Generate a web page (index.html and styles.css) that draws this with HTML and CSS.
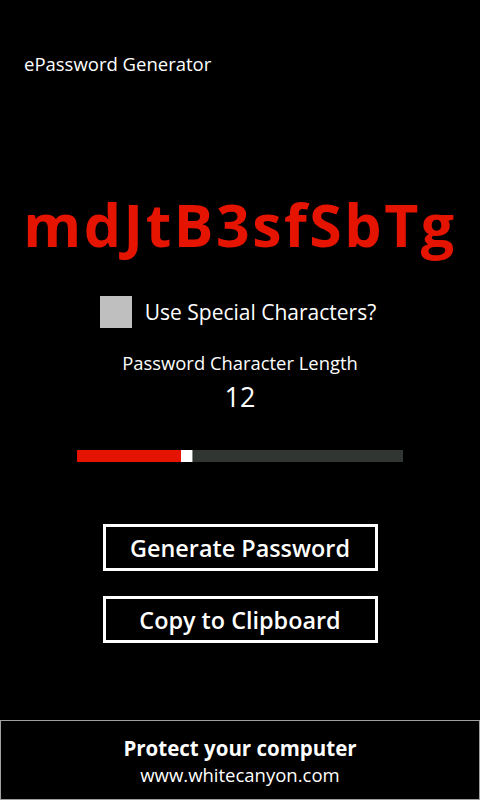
FILE: index.html
```html
<!DOCTYPE html>
<html>
<head>
<meta charset="utf-8">
<title>ePassword Generator</title>
<link rel="stylesheet" href="styles.css">
</head>
<body>
<div class="app">
  <main class="main">
    <div class="title">ePassword Generator</div>
    <div class="password">mdJtB3sfSbTg</div>
    <label class="check-row">
      <span class="checkbox"></span>
      <span class="check-label">Use Special Characters?</span>
    </label>
    <div class="length-label">Password Character Length</div>
    <div class="length-value">12</div>
    <div class="slider">
      <div class="slider-fill" style="width: 104px"></div>
      <div class="slider-thumb"></div>
      <div class="slider-rest"></div>
    </div>
    <div class="buttons">
      <button class="btn">Generate Password</button>
      <button class="btn">Copy to Clipboard</button>
    </div>
  </main>
  <footer class="ad">
    <div class="ad-title">Protect your computer</div>
    <div class="ad-url">www.whitecanyon.com</div>
  </footer>
</div>
</body>
</html>
```

FILE: styles.css
```css
html, body {
  margin: 0;
  padding: 0;
  background: #000;
}
body {
  font-family: "Open Sans", "Noto Sans", sans-serif;
  color: #fff;
}
.app {
  width: 480px;
  height: 800px;
  display: flex;
  flex-direction: column;
}
.main {
  flex: 1;
  display: flex;
  flex-direction: column;
}
.title {
  margin: 52px 0 0 24px;
  font-size: 18.5px;
  line-height: 24px;
}
.password {
  margin-top: 116px;
  text-align: center;
  font-size: 59px;
  font-weight: 700;
  line-height: 64px;
  color: #e51400;
  letter-spacing: 2.5px;
  padding-left: 0;
}
.check-row {
  margin-top: 40px;
  padding-right: 4px;
  display: flex;
  justify-content: center;
  align-items: center;
  gap: 13px;
}
.checkbox {
  width: 32px;
  height: 32px;
  background: #bfbfbf;
}
.check-label {
  font-size: 21px;
  line-height: 32px;
}
.length-label {
  margin-top: 23px;
  text-align: center;
  font-size: 18.4px;
  line-height: 24px;
}
.length-value {
  margin-top: 6px;
  text-align: center;
  font-size: 27px;
  font-weight: 400;
  line-height: 32px;
}
.slider {
  margin: 37px 77px 0 77px;
  height: 12px;
  display: flex;
}
.slider-fill {
  background: #e51400;
}
.slider-thumb {
  width: 11px;
  background: #fff;
  border-right: 1px solid #888;
}
.slider-rest {
  flex: 1;
  background: #323632;
}
.buttons {
  margin-top: 62px;
  display: flex;
  flex-direction: column;
  align-items: center;
  gap: 25px;
}
.btn {
  width: 275px;
  height: 47px;
  box-sizing: border-box;
  border: 3px solid #fff;
  background: #000;
  color: #fff;
  font-family: "Open Sans", "Noto Sans", sans-serif;
  font-size: 23.4px;
  font-weight: 600;
  padding: 0;
}
.ad {
  height: 80px;
  box-sizing: border-box;
  border: 1px solid #a0a0a0;
  display: flex;
  flex-direction: column;
  align-items: center;
  padding-top: 13px;
}
.ad-title {
  font-size: 20.5px;
  font-weight: 700;
  line-height: 28px;
}
.ad-url {
  font-size: 18.5px;
  line-height: 24px;
  margin-top: 1px;
}
```
